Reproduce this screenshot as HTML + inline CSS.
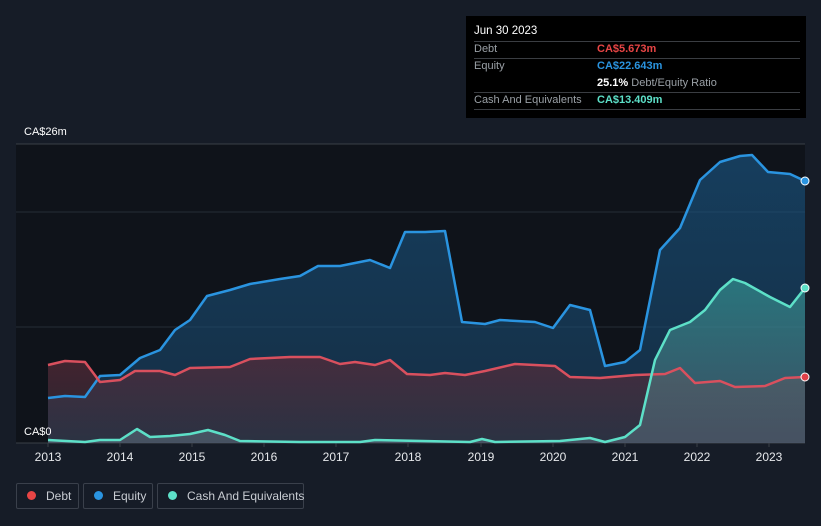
<!DOCTYPE html>
<html><head><style>
body{margin:0;width:821px;height:526px;background:#161c27;font-family:"Liberation Sans",sans-serif;overflow:hidden;position:relative}
.tt{position:absolute;left:466px;top:16px;width:340px;height:102px;background:#000;color:#fff;font-size:11px}
.tt .r{position:absolute;left:8px;width:326px;border-top:1px solid #3a3d42}
.lab{color:#9aa0a6}
.leg{position:absolute;top:483px;height:26px;border:1px solid #3a404b;border-radius:2px;color:#c8ccd2;font-size:12px;line-height:24px;box-sizing:border-box;white-space:nowrap}
.leg i{display:inline-block;width:9px;height:9px;border-radius:50%;margin:0 10px 0 10px;vertical-align:0px}
</style></head><body>
<svg width="821" height="526" style="position:absolute;left:0;top:0">
<defs>
<linearGradient id="ge" x1="0" y1="0" x2="0" y2="1"><stop offset="0" stop-color="#1a5a8a" stop-opacity=".6"/><stop offset="1" stop-color="#1a4a70" stop-opacity=".5"/></linearGradient>
<linearGradient id="gc" x1="0" y1="0" x2="0" y2="1"><stop offset="0" stop-color="#3aa8a0" stop-opacity=".55"/><stop offset="1" stop-color="#607080" stop-opacity=".5"/></linearGradient>
<linearGradient id="gd" x1="0" y1="0" x2="0" y2="1"><stop offset="0" stop-color="#5a2a38" stop-opacity=".7"/><stop offset="1" stop-color="#3a3440" stop-opacity=".6"/></linearGradient>
</defs>
<rect x="16" y="144" width="789" height="299" fill="#0f131a"/>
<line x1="16" y1="144" x2="805" y2="144" stroke="#3a3f47"/>
<line x1="16" y1="212" x2="805" y2="212" stroke="#262c35"/>
<line x1="16" y1="327" x2="805" y2="327" stroke="#262c35"/>
<line x1="16" y1="443" x2="805" y2="443" stroke="#3a3f47"/>
<g stroke="#3a3f47">
<line x1="48" y1="443" x2="48" y2="447"/><line x1="120" y1="443" x2="120" y2="447"/><line x1="192" y1="443" x2="192" y2="447"/><line x1="264" y1="443" x2="264" y2="447"/><line x1="336" y1="443" x2="336" y2="447"/><line x1="408" y1="443" x2="408" y2="447"/><line x1="481" y1="443" x2="481" y2="447"/><line x1="553" y1="443" x2="553" y2="447"/><line x1="625" y1="443" x2="625" y2="447"/><line x1="697" y1="443" x2="697" y2="447"/><line x1="769" y1="443" x2="769" y2="447"/>
</g>
<path d="M48,398 L65,396 85,397 100,376 120,375 140,358 160,350 175,330 190,320 207,296 230,290 250,284 280,279 300,276 318,266 340,266 370,260 390,268 405,232 425,232 445,231 462,322 485,324 500,320 535,322 553,328 570,305 590,310 605,366 625,362 640,350 660,250 680,228 700,180 720,162 740,156 752,155 768,172 790,174 805,181 L805,443 48,443Z" fill="url(#ge)"/>
<path d="M48,365 L65,361 85,362 100,382 120,380 135,371 160,371 175,375 190,368 230,367 250,359 290,357 320,357 340,364 355,362 375,365 390,360 407,374 430,375 445,373 465,375 485,371 515,364 535,365 555,366 570,377 600,378 635,375 665,374 680,368 695,383 720,381 735,387 765,386 785,378 805,377 L805,443 48,443Z" fill="url(#gd)"/>
<path d="M48,440 L85,442 100,440 120,440 137,429 150,437 170,436 190,434 208,430 225,435 240,441 300,442 360,442 375,440 470,442 482,439 495,442 560,441 590,438 605,442 625,437 640,425 655,360 670,330 690,322 705,310 720,290 733,279 745,283 770,297 790,307 805,288 L805,443 48,443Z" fill="url(#gc)"/>
<g fill="none" stroke-width="2.5" stroke-linejoin="round">
<path d="M48,398 L65,396 85,397 100,376 120,375 140,358 160,350 175,330 190,320 207,296 230,290 250,284 280,279 300,276 318,266 340,266 370,260 390,268 405,232 425,232 445,231 462,322 485,324 500,320 535,322 553,328 570,305 590,310 605,366 625,362 640,350 660,250 680,228 700,180 720,162 740,156 752,155 768,172 790,174 805,181" stroke="#2a94e0"/>
<path d="M48,365 L65,361 85,362 100,382 120,380 135,371 160,371 175,375 190,368 230,367 250,359 290,357 320,357 340,364 355,362 375,365 390,360 407,374 430,375 445,373 465,375 485,371 515,364 535,365 555,366 570,377 600,378 635,375 665,374 680,368 695,383 720,381 735,387 765,386 785,378 805,377" stroke="#d9505e"/>
<path d="M48,440 L85,442 100,440 120,440 137,429 150,437 170,436 190,434 208,430 225,435 240,441 300,442 360,442 375,440 470,442 482,439 495,442 560,441 590,438 605,442 625,437 640,425 655,360 670,330 690,322 705,310 720,290 733,279 745,283 770,297 790,307 805,288" stroke="#5de0c8"/>
</g>
<circle cx="805" cy="181" r="4" fill="#2a94e0" stroke="#fff" stroke-width="1"/>
<circle cx="805" cy="288" r="4" fill="#5de0c8" stroke="#fff" stroke-width="1"/>
<circle cx="805" cy="377" r="4" fill="#e04048" stroke="#fff" stroke-width="1"/>
<g fill="#fff" font-size="11" font-family="Liberation Sans,sans-serif">
<text x="24" y="135">CA$26m</text><text x="24" y="435">CA$0</text>
</g>
<g fill="#e6e8eb" font-size="12" font-family="Liberation Sans,sans-serif" text-anchor="middle">
<text x="48" y="461">2013</text><text x="120" y="461">2014</text><text x="192" y="461">2015</text><text x="264" y="461">2016</text><text x="336" y="461">2017</text><text x="408" y="461">2018</text><text x="481" y="461">2019</text><text x="553" y="461">2020</text><text x="625" y="461">2021</text><text x="697" y="461">2022</text><text x="769" y="461">2023</text>
</g>
</svg>
<div class="tt">
<div style="position:absolute;left:8px;top:9px;font-size:11.5px">Jun 30 2023</div>
<div class="r" style="top:25px"></div>
<div class="lab" style="position:absolute;left:8px;top:27px">Debt</div><div style="position:absolute;left:131px;top:27px;color:#e84545;font-weight:bold">CA$5.673m</div>
<div class="r" style="top:42px"></div>
<div class="lab" style="position:absolute;left:8px;top:44px">Equity</div><div style="position:absolute;left:131px;top:44px;color:#2a94e0;font-weight:bold">CA$22.643m</div>
<div style="position:absolute;left:131px;top:61px"><b>25.1%</b> <span class="lab">Debt/Equity Ratio</span></div>
<div class="r" style="top:76px"></div>
<div class="lab" style="position:absolute;left:8px;top:78px">Cash And Equivalents</div><div style="position:absolute;left:131px;top:78px;color:#5de0c8;font-weight:bold">CA$13.409m</div>
<div class="r" style="top:93px"></div>
</div>
<div class="leg" style="left:16px;width:63px"><i style="background:#e84545"></i>Debt</div>
<div class="leg" style="left:83px;width:70px"><i style="background:#2a94e0"></i>Equity</div>
<div class="leg" style="left:157px;width:147px"><i style="background:#5de0c8"></i>Cash And Equivalents</div>
</body></html>
